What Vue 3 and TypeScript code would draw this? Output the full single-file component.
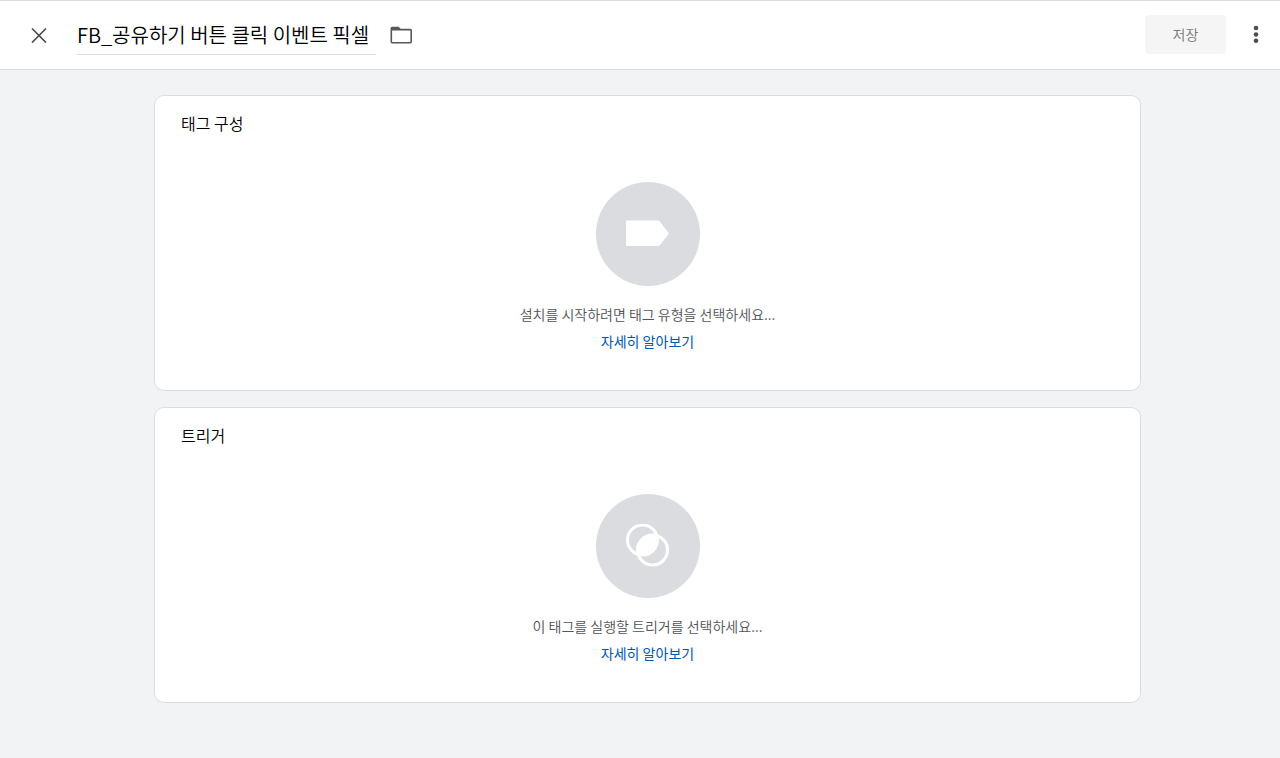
<script setup lang="ts">
import { ref } from 'vue'

interface Section {
  id: string
  title: string
  hint: string
  icon: 'tag' | 'trigger'
}

const tagName = ref<string>('FB_공유하기 버튼 클릭 이벤트 픽셀')

const sections: Section[] = [
  { id: 'tag', title: '태그 구성', hint: '설치를 시작하려면 태그 유형을 선택하세요...', icon: 'tag' },
  { id: 'trigger', title: '트리거', hint: '이 태그를 실행할 트리거를 선택하세요...', icon: 'trigger' },
]
</script>

<template>
  <div class="page">
    <header class="bar">
      <button class="icon-button close" type="button" aria-label="닫기">
        <svg width="16" height="16" viewBox="0 0 16 16" fill="none" stroke="#4b4d50" stroke-width="1.7">
          <path d="M1 1.500L15 15.500M15 1.500L1 15.500" />
        </svg>
      </button>
      <input v-model="tagName" class="name" type="text" aria-label="태그 이름" />
      <button class="icon-button" type="button" aria-label="폴더">
        <svg width="22" height="18" viewBox="0 0 22 18">
          <path
            fill="#55575a"
            fill-rule="evenodd"
            d="M2 0.800H8.500L10.700 2.800H20.300Q22 2.800 22 4.500V15.800Q22 17.500 20.300 17.500H2.200Q0.500 17.500 0.500 15.800V2.500Q0.500 0.800 2 0.800ZM2.100 4.500V15.900H20.400V4.500Z"
          />
        </svg>
      </button>
      <div class="actions">
        <button class="save" type="button" disabled>저장</button>
        <button class="icon-button" type="button" aria-label="추가 작업">
          <svg width="6" height="18" viewBox="0 0 6 18" fill="#4b4d50">
            <circle cx="3" cy="3" r="2.300" />
            <circle cx="3" cy="9.500" r="2.300" />
            <circle cx="3" cy="15.700" r="2.300" />
          </svg>
        </button>
      </div>
    </header>

    <main class="content">
      <section v-for="section in sections" :key="section.id" class="card" :aria-labelledby="section.id">
        <h2 :id="section.id" class="card-title">{{ section.title }}</h2>
        <div class="empty">
          <div class="disc">
            <svg v-if="section.icon === 'tag'" width="44" height="44" viewBox="0 0 44 44">
              <path fill="#fff" d="M1 8.500H31.500Q33 8.500 34 9.700L43 21.500L34 33Q33 34 31.500 34H1Q0 34 0 33V9.500Q0 8.500 1 8.500Z" />
            </svg>
            <svg v-else width="44" height="44" viewBox="0 0 44 44">
              <g fill="none" stroke="#fff" stroke-width="3">
                <circle cx="16.500" cy="16" r="15" />
                <circle cx="26.500" cy="26" r="15" />
              </g>
              <path fill="#fff" d="M12.300 30.200A15 15 0 0 1 30.700 11.800A15 15 0 0 1 12.300 30.200Z" />
            </svg>
          </div>
          <p class="hint">{{ section.hint }}</p>
          <a class="link" href="#">자세히 알아보기</a>
        </div>
      </section>
    </main>
  </div>
</template>

<style>
body {
  margin: 0;
  background: #f1f3f4;
}
</style>

<style scoped>
.page {
  min-height: 100vh;
  background: #f1f3f4;
  color: #000;
  font-family: "Noto Sans CJK KR", sans-serif;
  font-weight: 350;
}

.bar {
  box-sizing: border-box;
  height: 70px;
  display: flex;
  align-items: center;
  padding: 0 21px 0 30px;
  background: #fff;
  border-top: 1px solid #dadce0;
  border-bottom: 1px solid #dadce0;
}

.icon-button {
  display: flex;
  padding: 0;
  border: 0;
  background: none;
}

.close {
  padding: 1px;
}

.name {
  box-sizing: border-box;
  width: 299px;
  height: 40px;
  margin: 0 14px 0 29px;
  padding: 0;
  border: 0;
  border-bottom: 1px solid #dadce0;
  outline: 0;
  background: none;
  color: #000;
  font: inherit;
  font-size: 20px;
}

.actions {
  display: flex;
  align-items: center;
  gap: 27px;
  margin-left: auto;
  padding-bottom: 2px;
}

.save {
  width: 81px;
  height: 39px;
  padding: 0;
  border: 0;
  border-radius: 4px;
  background: #f5f5f5;
  color: #777;
  font: inherit;
  font-size: 14px;
}

.content {
  display: grid;
  gap: 16px;
  padding: 25px 139px 55px 154px;
}

.card {
  padding: 15px 26px 35px;
  background: #fff;
  border: 1px solid #dadce0;
  border-radius: 10px;
}

.card-title {
  margin: 0;
  font-size: 16px;
  font-weight: inherit;
  line-height: 24px;
}

.empty {
  display: flex;
  flex-direction: column;
  align-items: center;
  margin-top: 47px;
}

.disc {
  width: 104px;
  height: 104px;
  display: flex;
  align-items: center;
  justify-content: center;
  border-radius: 50%;
  background: #dadce0;
}

.hint {
  margin: 15px 0 0;
  color: #505357;
  font-size: 14px;
  line-height: 26px;
}

.link {
  color: #0057af;
  font-size: 14px;
  font-weight: 400;
  line-height: 28px;
  text-decoration: none;
}
</style>
